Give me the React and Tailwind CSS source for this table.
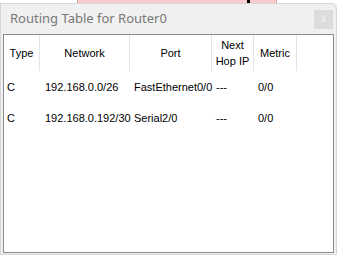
export default function App() {
    const cols = [
        { label: 'Type', w: 'w-[36px]' },
        { label: 'Network', w: 'w-[90px]' },
        { label: 'Port', w: 'w-[82px]' },
        { label: 'Next Hop IP', w: 'w-[42px]', wrap: true },
        { label: 'Metric', w: 'w-[43px]' },
    ];

    const routes = [
        ['C', '192.168.0.0/26', 'FastEthernet0/0', '---', '0/0'],
        ['C', '192.168.0.192/30', 'Serial2/0', '---', '0/0'],
    ];

    return (
        <div className="w-[337px] h-[255px] bg-[#f0f0f0] overflow-hidden flex flex-col">
            {/* strip of the window behind */}
            <div className="h-[3px] flex shrink-0 bg-white">
                <div className="ml-[77px] w-[200px] bg-[#fccccc] border-x border-[#c9a3a3] relative">
                    <div className="absolute left-[169px] top-0 w-[3px] h-[3px] bg-black" />
                </div>
            </div>

            <div className="flex-1 flex flex-col bg-[#f0f0f0] border border-[#d6d6d6] rounded-tr-[7px]">
                {/* title bar */}
                <div className="h-[30px] flex items-center justify-between pl-[9px] pr-[3px]">
                    <span className="text-[13px] text-[#787878] font-['Segoe_UI','Noto_Sans',sans-serif]">
                        Routing Table for Router0
                    </span>
                    <div className="w-[19px] h-[19px] bg-[#dcdcdc] flex items-center justify-center text-[10px] leading-none text-[#f4f4f4] font-['Liberation_Sans',sans-serif]">
                        x
                    </div>
                </div>

                {/* table */}
                <div className="flex-1 mx-[2px] mb-[1px] bg-white border border-[#8a8a90] font-['Liberation_Sans',Arial,sans-serif] text-[11px] text-black">
                    <div className="flex h-[36px]">
                        {cols.map(c => (
                            <div
                                key={c.label}
                                className={`${c.w} border-r border-[#e3e3e3] flex items-center justify-center text-center leading-[16px]`}
                            >
                                {c.wrap ? <span>Next<br />Hop IP</span> : c.label}
                            </div>
                        ))}
                    </div>
                    {routes.map((r, i) => (
                        <div key={i} className="flex h-[30px] items-center mt-[1px] first:mt-[2px]">
                            <div className="w-[36px] pl-[3px]">{r[0]}</div>
                            <div className="w-[90px] pl-[5px] whitespace-nowrap">{r[1]}</div>
                            <div className="w-[82px] pl-[4px] whitespace-nowrap">{r[2]}</div>
                            <div className="w-[42px] pl-[4px]">{r[3]}</div>
                            <div className="w-[43px] pl-[4px]">{r[4]}</div>
                        </div>
                    ))}
                </div>
            </div>
        </div>
    );
}
